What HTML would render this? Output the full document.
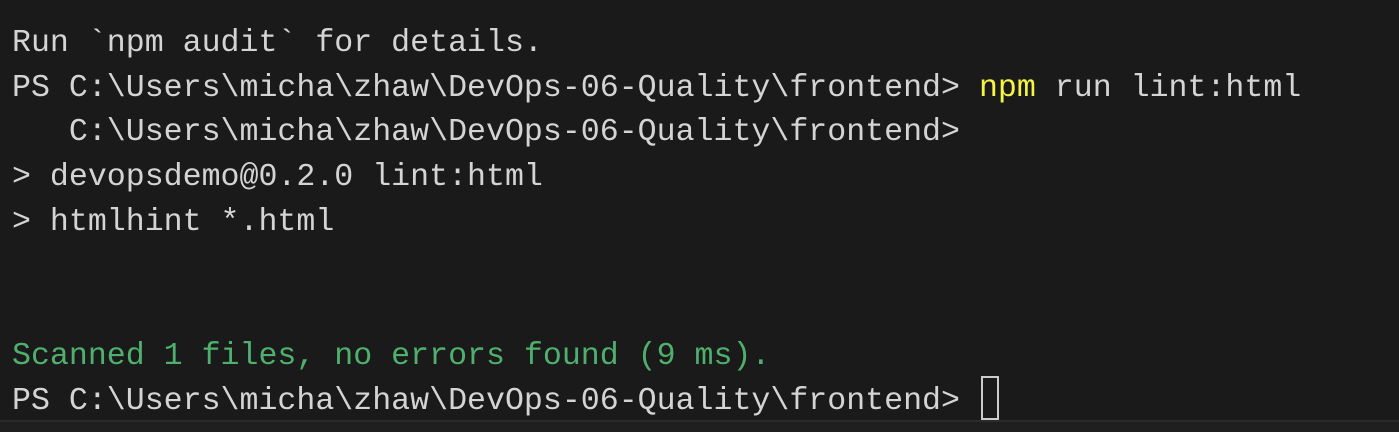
<!DOCTYPE html>
<html><head><style>
html,body{margin:0;padding:0;width:1399px;height:432px;overflow:hidden;background:#1a1a1a;}
.t{position:absolute;left:12px;top:22px;font-family:"Liberation Mono",monospace;font-size:31.6px;line-height:44.7px;color:#d4d4d4;white-space:pre;}
.y{color:#f5f543}.g{color:#4fb06e}
.cur{position:absolute;left:981px;top:376px;width:14px;height:40px;border:2px solid #cccccc;}
.bl{position:absolute;left:0;top:420px;width:1399px;height:2px;background:#2b2b2b;}
.bb{position:absolute;left:0;top:422px;width:1399px;height:10px;background:#1f1f1f;}
</style></head><body>
<div class="t">Run `npm audit` for details.
PS C:\Users\micha\zhaw\DevOps-06-Quality\frontend&gt; <span class="y">npm</span> run lint:html
   C:\Users\micha\zhaw\DevOps-06-Quality\frontend&gt;
&gt; devopsdemo@0.2.0 lint:html
&gt; htmlhint *.html


<span class="g">Scanned 1 files, no errors found (9 ms).</span>
PS C:\Users\micha\zhaw\DevOps-06-Quality\frontend&gt; </div>
<div class="cur"></div>
<div class="bl"></div><div class="bb"></div>
</body></html>
